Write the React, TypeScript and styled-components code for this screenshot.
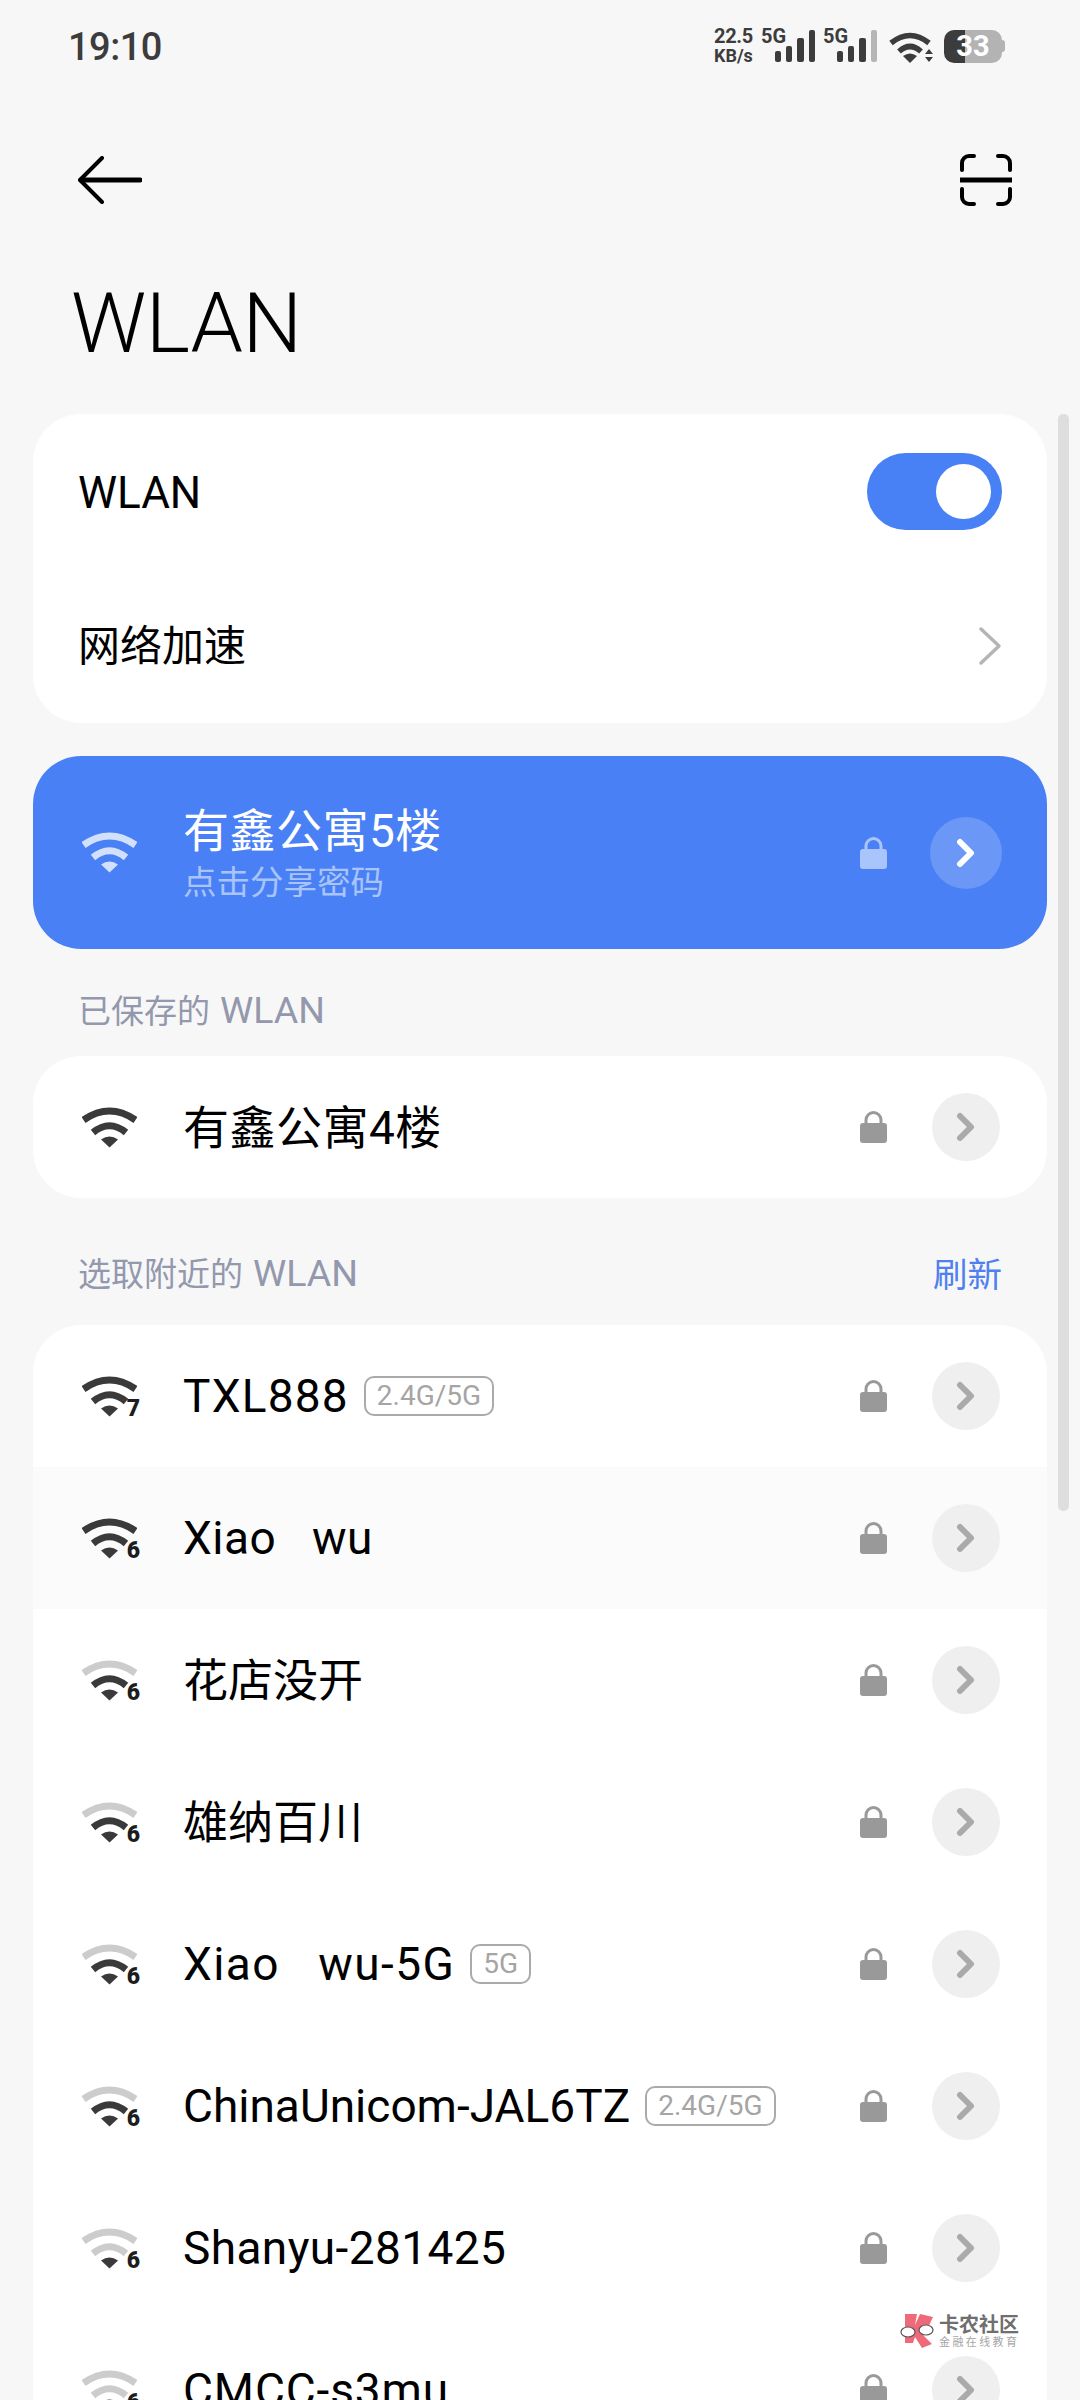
import styled, { createGlobalStyle } from 'styled-components';

const GlobalStyle = createGlobalStyle`
  html, body {
    margin: 0;
    padding: 0;
    background: #f7f7f8;
  }
  * {
    box-sizing: border-box;
  }
`;

const FONT = `Roboto, "Noto Sans CJK SC", sans-serif`;

// Styled element (Page)
const Page = styled.div`
  background: #f7f7f8;
  color: #000;
  font-family: ${FONT};
  height: 2400px;
  overflow: hidden;
  position: relative;
  width: 1080px;
`;
// Styled element (StatusBar)
const StatusBar = styled.div`
  align-items: center;
  display: flex;
  height: 90px;
  justify-content: space-between;
  padding: 0 75px 0 68px;
`;
const Clock = styled.span`
  color: #3c3c3c;
  font-size: 38px;
  font-weight: 500;
  letter-spacing: -0.5px;
  padding-top: 4px;
`;
const StatusIcons = styled.div`
  align-items: flex-start;
  display: flex;
  height: 37px;
`;
const SpeedColumn = styled.div`
  color: #3c3c3c;
  display: flex;
  flex-direction: column;
  font-weight: 700;
  gap: 3px;
  width: 47px;
`;
const SpeedValue = styled.span`
  font-size: 20px;
  height: 18px;
  letter-spacing: -0.3px;
  line-height: 18px;
`;
const SpeedUnit = styled.span`
  font-size: 18px;
  height: 16px;
  line-height: 16px;
`;
const SignalGroup = styled.div<{ $gap?: number }>`
  display: flex;
  margin-left: ${(p) => p.$gap ?? 0}px;
`;
const SignalLabel = styled.span`
  color: #3c3c3c;
  font-size: 20px;
  font-weight: 700;
  height: 18px;
  line-height: 18px;
  width: 25px;
`;
const SignalBars = styled.svg`
  margin-left: -11px;
  margin-top: 3px;
`;
const StatusWifi = styled.svg`
  margin-left: 12px;
  margin-top: 4px;
`;
const Battery = styled.div`
  align-items: center;
  background: linear-gradient(90deg, #3c3c3c 21px, #b3b3b3 21px);
  border-radius: 10px;
  color: #fff;
  display: flex;
  font-size: 29px;
  font-weight: 700;
  height: 33px;
  justify-content: center;
  margin-left: 11px;
  margin-right: 3px;
  margin-top: 3px;
  position: relative;
  width: 58px;
  &::after {
    background: #b3b3b3;
    border-radius: 0 3px 3px 0;
    content: '';
    height: 12px;
    position: absolute;
    right: -3px;
    top: 10px;
    width: 3px;
  }
`;
// Styled element (TopBar)
const TopBar = styled.div`
  align-items: center;
  display: flex;
  height: 70px;
  justify-content: space-between;
  margin-top: 55px;
  padding: 0 68px 0 78px;
`;
const PageTitle = styled.h1`
  font-size: 84px;
  font-weight: 300;
  height: 100px;
  letter-spacing: -0.5px;
  line-height: 100px;
  margin: 59px 0 0;
  padding-left: 71px;
`;
// Styled element (Content)
const Content = styled.div`
  display: flex;
  flex-direction: column;
  margin-top: 40px;
  padding: 0 33px;
`;
const Card = styled.section`
  background: #fff;
  border-radius: 48px;
`;
const SettingRow = styled.div`
  align-items: center;
  display: flex;
  height: 154.5px;
  justify-content: space-between;
  padding: 0 45px;
`;
const SettingLabel = styled.span<{ $cjk?: boolean }>`
  font-size: ${(p) => (p.$cjk ? 42 : 44)}px;
  padding-bottom: ${(p) => (p.$cjk ? 6 : 0)}px;
  padding-top: ${(p) => (p.$cjk ? 0 : 3)}px;
`;
const Toggle = styled.div`
  align-items: center;
  background: #4880f5;
  border-radius: 39px;
  display: flex;
  height: 77px;
  justify-content: flex-end;
  padding-right: 11px;
  width: 135px;
`;
const ToggleKnob = styled.div`
  background: #fff;
  border-radius: 50%;
  height: 55px;
  width: 55px;
`;
const ActiveCard = styled.section`
  align-items: center;
  background: #4a80f5;
  border-radius: 48px;
  color: #fff;
  display: flex;
  height: 193px;
  margin-top: 33px;
  padding: 0 47px 0 49px;
`;
const ActiveText = styled.div`
  display: flex;
  flex: 1;
  flex-direction: column;
  margin-left: 46px;
`;
const ActiveName = styled.span`
  font-size: 46px;
  height: 60px;
  letter-spacing: 0.5px;
  line-height: 60px;
`;
const ActiveHint = styled.span`
  color: #a8c4fb;
  font-size: 33.5px;
  height: 44px;
  line-height: 44px;
`;
const SectionHeader = styled.div<{ $bottom: number; $height: number }>`
  align-items: flex-end;
  color: #9398ad;
  display: flex;
  font-size: 33px;
  height: ${(p) => p.$height}px;
  justify-content: space-between;
  line-height: 40px;
  padding: 0 45px ${(p) => p.$bottom}px;
`;
const HeaderLatin = styled.span`
  font-size: 37.5px;
  margin-left: 10px;
`;
const RefreshLink = styled.span`
  color: #4f80ef;
  font-size: 34.5px;
`;
const NetworkRow = styled.div<{ $hover?: boolean }>`
  align-items: center;
  background: ${(p) => (p.$hover ? '#fbfbfb' : 'transparent')};
  display: flex;
  height: 142px;
  padding: 0 47px 0 49px;
`;
const NetworkIcon = styled.div`
  flex: none;
  height: 41px;
  position: relative;
  width: 55px;
`;
const WifiGrade = styled.span`
  color: #1d1d1d;
  font-size: 23px;
  font-weight: 900;
  line-height: 16px;
  position: absolute;
  right: -3px;
  bottom: 0;
`;
const NetworkName = styled.div`
  align-items: center;
  display: flex;
  flex: 1;
  margin-left: 46px;
  min-width: 0;
`;
const NameText = styled.span<{ $cjk?: boolean; $size?: number; $track?: number }>`
  font-size: ${(p) => p.$size ?? 46}px;
  letter-spacing: ${(p) => p.$track ?? 0}px;
  padding-bottom: ${(p) => (p.$cjk ? 6 : 0)}px;
  white-space: pre;
`;
const BandTag = styled.span`
  border: 2px solid #aaa;
  border-radius: 10px;
  color: #a5a5a5;
  font-size: 28px;
  height: 40px;
  line-height: 36px;
  margin-left: 15px;
  padding: 0 11px;
`;
const LockIcon = styled.svg`
  flex: none;
  margin-right: 45px;
`;
const ArrowCircle = styled.div<{ $active?: boolean }>`
  align-items: center;
  background: ${(p) => (p.$active ? '#6b97f7' : '#efefef')};
  border-radius: 50%;
  display: flex;
  flex: none;
  height: ${(p) => (p.$active ? 72 : 68)}px;
  justify-content: center;
  margin: 0 ${(p) => (p.$active ? -2 : 0)}px;
  width: ${(p) => (p.$active ? 72 : 68)}px;
`;
// Styled element (Scrollbar)
const Scrollbar = styled.div`
  background: #dedede;
  border-radius: 5px;
  height: 1097px;
  left: 1058px;
  position: absolute;
  top: 414px;
  width: 11px;
`;
// Styled element (Watermark)
const Watermark = styled.div`
  align-items: center;
  display: flex;
  gap: 5px;
  left: 900px;
  position: absolute;
  top: 2313px;
`;
const WatermarkText = styled.div`
  display: flex;
  flex-direction: column;
`;
const WatermarkTitle = styled.span`
  color: #6f6f6f;
  font-size: 20px;
  font-weight: 700;
  line-height: 22px;
`;
const WatermarkSub = styled.span`
  color: #a5a5a5;
  font-size: 11px;
  letter-spacing: 2.4px;
  line-height: 13px;
`;

/** Interface */
interface WifiProps {
  level: number;
  tint?: { on: string; off: string };
}
interface NetworkItem {
  name: string;
  cjk?: boolean;
  track?: number;
  level: number;
  grade: number;
  band?: string;
  hover?: boolean;
}

const NETWORKS: NetworkItem[] = [
  { name: 'TXL888', track: 1.2, level: 3, grade: 7, band: '2.4G/5G' },
  { name: 'Xiao   wu', track: 0.5, level: 3, grade: 6, hover: true },
  { name: '花店没开', cjk: true, level: 2, grade: 6 },
  { name: '雄纳百川', cjk: true, level: 2, grade: 6 },
  { name: 'Xiao   wu-5G', track: 1.4, level: 2, grade: 6, band: '5G' },
  { name: 'ChinaUnicom-JAL6TZ', level: 2, grade: 6, band: '2.4G/5G' },
  { name: 'Shanyu-281425', track: 0.4, level: 1, grade: 6 },
  { name: 'CMCC-s3mu', track: 0.9, level: 1, grade: 6 },
];

const WifiGlyph = ({ level, tint = { on: '#3a3a3a', off: '#cccccc' } }: WifiProps): JSX.Element => (
  <svg width="55" height="41" viewBox="0 0 55 41" fill="none">
    <path d="M1.5 13Q27.5 -5 53.5 13" stroke={level > 2 ? tint.on : tint.off} strokeWidth="7" />
    <path d="M11 25.5Q27.5 12 44 25.5" stroke={level > 1 ? tint.on : tint.off} strokeWidth="7" />
    <path d="M19 32.5Q27.5 26.5 36 32.5L27.5 40.5Z" fill={tint.on} />
  </svg>
);

const Lock = ({ color }: { color: string }): JSX.Element => (
  <LockIcon width="27" height="32" viewBox="0 0 27 32" fill="none">
    <rect x="0" y="12" width="27" height="20" rx="3" fill={color} />
    <path d="M6 14V9a7.5 7.5 0 0 1 15 0V14" stroke={color} strokeWidth="3" />
  </LockIcon>
);

const Chevron = ({ color }: { color: string }): JSX.Element => (
  <svg width="20" height="32" viewBox="0 0 20 32" fill="none">
    <path d="M4 5L15 16L4 27" stroke={color} strokeWidth="6" strokeLinecap="round" strokeLinejoin="round" />
  </svg>
);

const Bars = ({ lastColor }: { lastColor: string }): JSX.Element => (
  <SignalBars width="40" height="35" viewBox="0 0 40 35">
    <rect x="0" y="21" width="6" height="11" rx="2" fill="#3c3c3c" />
    <rect x="11" y="16" width="6" height="16" rx="2" fill="#3c3c3c" />
    <rect x="22" y="8" width="7" height="24" rx="2" fill="#3c3c3c" />
    <rect x="34" y="0" width="6" height="32" rx="2" fill={lastColor} />
  </SignalBars>
);

const App = (): JSX.Element => {
  const blueWifi = { on: '#d3e0fb', off: '#d3e0fb' };

  return (
    <Page>
      <GlobalStyle />
      <StatusBar>
        <Clock>19:10</Clock>
        <StatusIcons>
          <SpeedColumn>
            <SpeedValue>22.5</SpeedValue>
            <SpeedUnit>KB/s</SpeedUnit>
          </SpeedColumn>
          <SignalGroup>
            <SignalLabel>5G</SignalLabel>
            <Bars lastColor="#3c3c3c" />
          </SignalGroup>
          <SignalGroup $gap={8}>
            <SignalLabel>5G</SignalLabel>
            <Bars lastColor="#b5b5b5" />
          </SignalGroup>
          <StatusWifi width="44" height="32" viewBox="0 0 44 32" fill="none">
            <path d="M2 12Q21 -3 40 12" stroke="#3c3c3c" strokeWidth="5.5" />
            <path d="M10 20.5Q21 10.5 32 20.5" stroke="#3c3c3c" strokeWidth="5.5" />
            <path d="M14 25Q21 20 28 25L21 32Z" fill="#3c3c3c" />
            <path d="M36 23L40 18L44 23ZM36 26H44L40 31Z" fill="#3c3c3c" />
          </StatusWifi>
          <Battery>33</Battery>
        </StatusIcons>
      </StatusBar>

      <TopBar>
        <svg width="64" height="48" viewBox="0 0 64 48" fill="none" stroke="#000">
          <path d="M24 2L2 24L24 46" strokeWidth="4" strokeLinecap="round" strokeLinejoin="round" />
          <path d="M3 24H62" strokeWidth="5" strokeLinecap="round" />
        </svg>
        <svg width="52" height="54" viewBox="0 0 52 54" fill="none" stroke="#000">
          <path d="M14 3H9a7 7 0 0 0-7 7V17M38 3H43a7 7 0 0 1 7 7V17M14 51H9a7 7 0 0 1-7-7V36M38 51H43a7 7 0 0 0 7-7V36" strokeWidth="4" strokeLinecap="round" />
          <path d="M0 27H52" strokeWidth="5" />
        </svg>
      </TopBar>
      <PageTitle>WLAN</PageTitle>

      <Content>
        <Card>
          <SettingRow>
            <SettingLabel>WLAN</SettingLabel>
            <Toggle>
              <ToggleKnob />
            </Toggle>
          </SettingRow>
          <SettingRow>
            <SettingLabel $cjk>网络加速</SettingLabel>
            <svg width="24" height="40" viewBox="0 0 24 40" fill="none">
              <path d="M3 3L21 20L3 37" stroke="#b5b5b5" strokeWidth="3.5" strokeLinecap="round" strokeLinejoin="round" />
            </svg>
          </SettingRow>
        </Card>

        <ActiveCard>
          <NetworkIcon>
            <WifiGlyph level={3} tint={blueWifi} />
          </NetworkIcon>
          <ActiveText>
            <ActiveName>有鑫公寓5楼</ActiveName>
            <ActiveHint>点击分享密码</ActiveHint>
          </ActiveText>
          <Lock color="#a9c5fb" />
          <ArrowCircle $active>
            <Chevron color="#fff" />
          </ArrowCircle>
        </ActiveCard>

        <SectionHeader $height={107} $bottom={24}>
          <span>已保存的<HeaderLatin>WLAN</HeaderLatin></span>
        </SectionHeader>
        <Card>
          <NetworkRow>
            <NetworkIcon>
              <WifiGlyph level={3} />
            </NetworkIcon>
            <NetworkName>
              <NameText $cjk $track={0.5}>有鑫公寓4楼</NameText>
            </NetworkName>
            <Lock color="#999" />
            <ArrowCircle>
              <Chevron color="#aaa" />
            </ArrowCircle>
          </NetworkRow>
        </Card>

        <SectionHeader $height={127} $bottom={30}>
          <span>选取附近的<HeaderLatin>WLAN</HeaderLatin></span>
          <RefreshLink>刷新</RefreshLink>
        </SectionHeader>
        <Card>
          {NETWORKS.map((item: NetworkItem): JSX.Element => (
            <NetworkRow key={item.name} $hover={item.hover}>
              <NetworkIcon>
                <WifiGlyph level={item.level} />
                <WifiGrade>{item.grade}</WifiGrade>
              </NetworkIcon>
              <NetworkName>
                <NameText $cjk={item.cjk} $size={item.cjk ? 45 : 46} $track={item.track}>{item.name}</NameText>
                {item.band ? <BandTag>{item.band}</BandTag> : null}
              </NetworkName>
              <Lock color="#999" />
              <ArrowCircle>
                <Chevron color="#aaa" />
              </ArrowCircle>
            </NetworkRow>
          ))}
        </Card>
      </Content>

      <Scrollbar />
      <Watermark>
        <svg width="34" height="36" viewBox="0 0 34 36">
          <path d="M5 1H17L15 12L20 1L33 4L27 17L21 20L32 31L22 35L15 24L13 30H5Z" fill="#ee6a78" />
          <ellipse cx="8" cy="19" rx="7" ry="5" fill="#fff" stroke="#555" strokeWidth="1.2" />
          <ellipse cx="26" cy="17" rx="7" ry="5" fill="#fff" stroke="#555" strokeWidth="1.2" />
        </svg>
        <WatermarkText>
          <WatermarkTitle>卡农社区</WatermarkTitle>
          <WatermarkSub>金融在线教育</WatermarkSub>
        </WatermarkText>
      </Watermark>
    </Page>
  );
};

export default App;
